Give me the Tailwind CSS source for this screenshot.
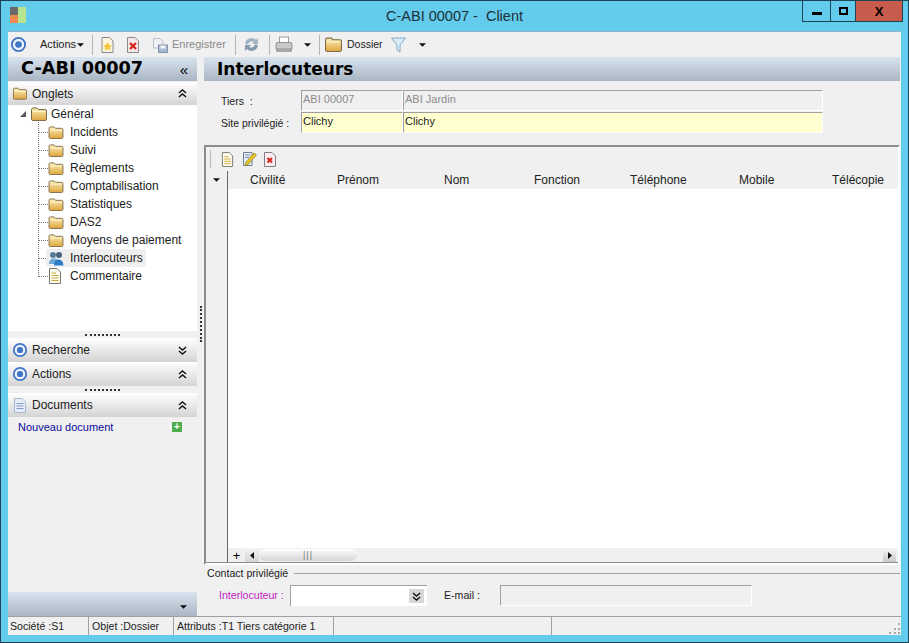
<!DOCTYPE html>
<html lang="fr">
<head>
<meta charset="utf-8">
<title>C-ABI 00007 - Client</title>
<script src="https://cdn.jsdelivr.net/npm/@tailwindcss/browser@4"></script>
</head>
<body class="overflow-hidden">
<svg class="absolute w-0 h-0">
  <defs>
    <linearGradient id="fold" x1="0" y1="0" x2="0" y2="1"><stop offset="0" stop-color="#fbeeb8"/><stop offset="1" stop-color="#dfa63f"/></linearGradient>
    <symbol id="folder" viewBox="0 0 16 14"><path d="M.5 2.500 Q.5 1 2 1H6L7.500 2.500H14Q15.500 2.500 15.500 4V12Q15.500 13.500 14 13.500H2Q.5 13.500 .5 12Z" fill="url(#fold)" stroke="#7d6b45"/><path d="M1.500 4.500H14.500" stroke="#fff6d0"/></symbol>
    <symbol id="ring" viewBox="0 0 18 18"><circle cx="9" cy="9" r="7" fill="#eef3fb" stroke="#3d74c5" stroke-width="2"/><circle cx="9" cy="9" r="3.500" fill="#3d74c5"/></symbol>
    <symbol id="page" viewBox="0 0 14 16"><path d="M1.500.5H9L12.500 4V15.500H1.500Z" fill="#fffdf0" stroke="#77766a"/><path d="M3.500 5H8M3.500 7.500H10.500M3.500 10H10.500M3.500 12.500H10.500" stroke="#c9a93c"/></symbol>
    <symbol id="dbl-up" viewBox="0 0 10 10"><path d="M1 4.500 5 1 9 4.500M1 9 5 5.500 9 9" fill="none" stroke="#111" stroke-width="1.500"/></symbol>
    <symbol id="dbl-down" viewBox="0 0 10 10"><path d="M1 1 5 4.500 9 1M1 5.500 5 9 9 5.500" fill="none" stroke="#111" stroke-width="1.500"/></symbol>
    <symbol id="caret" viewBox="0 0 8 4"><path d="M0 0H8L4 4Z" fill="#111"/></symbol>
  </defs>
</svg>

<div class="w-[909px] h-[643px] flex flex-col bg-[#63cbec] border border-[#1d4556] font-['Liberation_Sans',sans-serif] text-[12px] leading-none text-[#222]">

  <!-- title bar -->
  <div class="relative h-[30px] shrink-0 flex items-center justify-center text-[14.500px] text-[#20303a]">
    <div class="absolute left-[9px] top-[6px] w-[17px] h-[16px] flex">
      <div class="w-[8px] flex flex-col"><div class="h-[8px] bg-[#6a6a6a]"></div><div class="h-[8px] bg-[#f08a4e]"></div></div>
      <div class="w-[8px] bg-[#b5e48c]"></div>
    </div>
    <span>C-ABI 00007 -&nbsp; Client</span>
    <div class="absolute right-[5px] top-0 h-[21px] flex border border-t-0 border-[#1d4556]">
      <div class="w-[28px] flex items-end justify-center pb-[6px] border-r border-[#1d4556]"><div class="w-[10px] h-[3px] bg-black"></div></div>
      <div class="w-[25px] flex items-center justify-center border-r border-[#1d4556]"><div class="w-[9px] h-[8px] border-2 border-black"></div></div>
      <div class="w-[46px] flex items-center justify-center bg-[#c75b4c] text-[13px] font-bold text-black">X</div>
    </div>
  </div>

  <!-- client area -->
  <div class="ml-[7px] mr-[7px] h-[604px] flex flex-col bg-[#f0f0f0] border-t border-[#8fb3c4]">

    <!-- toolbar -->
    <div class="h-[25px] shrink-0 flex items-center text-[11px]">
      <svg class="w-[17px] h-[17px] ml-[2px]"><use href="#ring"/></svg>
      <span class="ml-[13px] w-[36px]">Actions</span>
      <svg class="w-[7px] h-[4px] ml-[1px]"><use href="#caret"/></svg>
      <div class="w-px h-[20px] bg-[#b5b5b5] ml-[8px]"></div>
      <svg class="w-[15px] h-[16px] ml-[7px]" viewBox="0 0 14 16"><path d="M1.500.5H9L12.500 4V15.500H1.500Z" fill="#fdf6dc" stroke="#8a8a8a"/><path d="M7 5l1.500 3 3 .4-2.200 2 .6 3L7 12l-2.900 1.400.6-3-2.200-2 3-.4Z" fill="#f2c53d"/></svg>
      <svg class="w-[14px] h-[16px] ml-[11px]" viewBox="0 0 14 16"><path d="M1.500.5H9L12.500 4V15.500H1.500Z" fill="#f5e8e8" stroke="#8a8a8a"/><path d="M4 6l6 6M10 6l-6 6" stroke="#d8261c" stroke-width="2.400"/></svg>
      <svg class="w-[16px] h-[16px] ml-[12px]" viewBox="0 0 16 16"><path d="M1.500 1.500H8L11 4.500V11H1.500Z" fill="#eef0f3" stroke="#b9bfc8"/><rect x="6.500" y="8" width="9" height="7.500" fill="#a9b8d2" stroke="#8391ab"/><rect x="8.500" y="8.500" width="5" height="3" fill="#f4f6fa"/></svg>
      <span class="ml-[4px] w-[54px] text-[#8a8a8a]">Enregistrer</span>
      <div class="w-px h-[20px] bg-[#b5b5b5] ml-[9px]"></div>
      <svg class="w-[17px] h-[17px] ml-[7px]" viewBox="0 0 17 17"><path d="M2 8A6.500 6.500 0 0 1 13 4L15 2V8H9L11 6A4 4 0 0 0 5 8.500Z" fill="#a3b4c5"/><path d="M15 9A6.500 6.500 0 0 1 4 13L2 15V9H8L6 11A4 4 0 0 0 12 8.500Z" fill="#8699ac"/></svg>
      <div class="w-px h-[20px] bg-[#b5b5b5] ml-[9px]"></div>
      <svg class="w-[18px] h-[17px] ml-[5px]" viewBox="0 0 18 17"><rect x="4.500" y="1" width="9" height="6" fill="#fff" stroke="#9a9a9a"/><path d="M1 8Q1 6.500 3 6.500H15Q17 6.500 17 8V13H1Z" fill="#c9c9c9" stroke="#8f8f8f"/><rect x="1" y="13" width="16" height="3" fill="#a7a7a7"/></svg>
      <svg class="w-[7px] h-[4px] ml-[11px]"><use href="#caret"/></svg>
      <div class="w-px h-[20px] bg-[#b5b5b5] ml-[8px]"></div>
      <svg class="w-[17px] h-[15px] ml-[5px]"><use href="#folder"/></svg>
      <span class="ml-[5px] w-[36px] text-[10.500px]">Dossier</span>
      <svg class="w-[15px] h-[16px] ml-[8px]" viewBox="0 0 15 16"><path d="M.5 1H14.500L9 8V15L6 13V8Z" fill="#dcecf7" stroke="#7fa8c9"/></svg>
      <svg class="w-[7px] h-[4px] ml-[13px]"><use href="#caret"/></svg>
    </div>

    <div class="flex-1 flex min-h-0">
      <!-- left panel -->
      <div class="w-[189px] shrink-0 flex flex-col">
        <div class="h-[24px] flex items-center justify-between pl-[13px] pr-[9px] bg-gradient-to-b from-[#d9e4ef] to-[#a9b6c3]">
          <span class="font-['DejaVu_Sans',sans-serif] font-bold text-[17.700px] text-black">C-ABI 00007</span>
          <span class="text-[15px] text-black">«</span>
        </div>
        <div class="mt-px h-[23px] flex items-center pl-[5px] pr-[10px] bg-gradient-to-b from-white to-[#d4d4d4]">
          <svg class="w-[14px] h-[13px]"><use href="#folder"/></svg>
          <span class="ml-[5px]">Onglets</span>
          <svg class="w-[9px] h-[9px] ml-auto"><use href="#dbl-up"/></svg>
        </div>

        <!-- tree -->
        <div class="relative h-[226px] bg-white">
          <div class="absolute left-[30px] top-[17px] h-[155px] border-l border-dotted border-[#777]"></div>
          <div class="h-[18px] flex items-center pl-[12px]">
            <svg class="w-[6px] h-[6px]" viewBox="0 0 6 6"><path d="M0 6H6V0Z" fill="#595959"/></svg>
            <svg class="w-[18px] h-[14px] ml-[4px]"><use href="#folder"/></svg>
            <span class="ml-[3px]">Général</span>
          </div>
          <div class="h-[18px] flex items-center pl-[31px]"><span class="w-[9px] border-t border-dotted border-[#777]"></span><svg class="w-[16px] h-[13px] mr-[6px]"><use href="#folder"/></svg>Incidents</div>
          <div class="h-[18px] flex items-center pl-[31px]"><span class="w-[9px] border-t border-dotted border-[#777]"></span><svg class="w-[16px] h-[13px] mr-[6px]"><use href="#folder"/></svg>Suivi</div>
          <div class="h-[18px] flex items-center pl-[31px]"><span class="w-[9px] border-t border-dotted border-[#777]"></span><svg class="w-[16px] h-[13px] mr-[6px]"><use href="#folder"/></svg>Règlements</div>
          <div class="h-[18px] flex items-center pl-[31px]"><span class="w-[9px] border-t border-dotted border-[#777]"></span><svg class="w-[16px] h-[13px] mr-[6px]"><use href="#folder"/></svg>Comptabilisation</div>
          <div class="h-[18px] flex items-center pl-[31px]"><span class="w-[9px] border-t border-dotted border-[#777]"></span><svg class="w-[16px] h-[13px] mr-[6px]"><use href="#folder"/></svg>Statistiques</div>
          <div class="h-[18px] flex items-center pl-[31px]"><span class="w-[9px] border-t border-dotted border-[#777]"></span><svg class="w-[16px] h-[13px] mr-[6px]"><use href="#folder"/></svg>DAS2</div>
          <div class="h-[18px] flex items-center pl-[31px]"><span class="w-[9px] border-t border-dotted border-[#777]"></span><svg class="w-[16px] h-[13px] mr-[6px]"><use href="#folder"/></svg>Moyens de paiement</div>
          <div class="h-[18px] flex items-center pl-[31px]">
            <span class="w-[7px] border-t border-dotted border-[#777]"></span>
            <div class="h-[18px] flex items-center pl-[2px] pr-[3px] bg-[#efefef]">
              <svg class="w-[16px] h-[15px] mr-[6px]" viewBox="0 0 16 15"><circle cx="5" cy="4" r="3" fill="#5c7d98"/><circle cx="11" cy="4" r="3" fill="#49637c"/><path d="M1 13Q1 7.500 6 7.500T11 13Z" fill="#6fa9d8"/><path d="M6 14.500Q6 8.500 10.500 8.500T15.500 14.500Z" fill="#2f7cc8"/></svg>Interlocuteurs
            </div>
          </div>
          <div class="h-[18px] flex items-center pl-[31px]"><span class="w-[9px] border-t border-dotted border-[#777]"></span><svg class="w-[14px] h-[16px] mr-[8px]"><use href="#page"/></svg>Commentaire</div>
        </div>

        <div class="h-[7px] flex items-center justify-center"><div class="w-[35px] border-t-2 border-dotted border-[#333]"></div></div>
        <div class="h-[24px] flex items-center pl-[4px] pr-[10px] bg-gradient-to-b from-white to-[#d4d4d4]">
          <svg class="w-[16px] h-[16px]"><use href="#ring"/></svg>
          <span class="ml-[4px]">Recherche</span>
          <svg class="w-[9px] h-[9px] ml-auto"><use href="#dbl-down"/></svg>
        </div>
        <div class="h-[24px] flex items-center pl-[4px] pr-[10px] bg-gradient-to-b from-white to-[#d4d4d4]">
          <svg class="w-[16px] h-[16px]"><use href="#ring"/></svg>
          <span class="ml-[4px]">Actions</span>
          <svg class="w-[9px] h-[9px] ml-auto"><use href="#dbl-up"/></svg>
        </div>
        <div class="h-[7px] flex items-center justify-center"><div class="w-[35px] border-t-2 border-dotted border-[#333]"></div></div>
        <div class="h-[24px] flex items-center pl-[6px] pr-[10px] bg-gradient-to-b from-white to-[#d4d4d4]">
          <svg class="w-[12px] h-[15px]" viewBox="0 0 12 15"><path d="M.5.5H8L11.500 4V14.500H.5Z" fill="#e6edf8" stroke="#a8b8d0"/><path d="M2.500 5.500H9.500M2.500 8H9.500M2.500 10.500H9.500" stroke="#7f9cc8"/></svg>
          <span class="ml-[6px]">Documents</span>
          <svg class="w-[9px] h-[9px] ml-auto"><use href="#dbl-up"/></svg>
        </div>
        <div class="mt-[3px] h-[14px] flex items-center pl-[10px] pr-[15px] text-[11px] text-[#0b0b9c]">
          Nouveau document
          <div class="ml-auto w-[10px] h-[10px] bg-[#4cae4c] flex items-center justify-center text-white font-bold text-[10px]">+</div>
        </div>

        <div class="mt-auto h-[24px] flex items-end justify-end pr-[10px] pb-[7px] bg-gradient-to-b from-[#d9e4ef] to-[#a9b6c3]">
          <svg class="w-[7px] h-[4px]"><use href="#caret"/></svg>
        </div>
      </div>

      <!-- vertical splitter -->
      <div class="w-[7px] shrink-0 flex items-center justify-center"><div class="h-[36px] mt-[-25px] ml-[1px] border-l-2 border-dotted border-[#333]"></div></div>

      <!-- right panel -->
      <div class="flex-1 min-w-0 flex flex-col pr-px">
        <div class="h-[24px] shrink-0 flex items-center pl-[13px] bg-gradient-to-b from-[#d9e4ef] to-[#a9b6c3]">
          <span class="font-['DejaVu_Sans',sans-serif] font-bold text-[17px] text-black">Interlocuteurs</span>
        </div>

        <div class="h-[64px] shrink-0 flex flex-col pt-[9px] gap-[1px]">
          <div class="h-[21px] flex text-[10.500px]">
            <span class="w-[97px] pl-[17px] pt-[6px]">Tiers &nbsp;:</span>
            <div class="w-[102px] border border-[#a0a0a0] border-r-white border-b-white pl-[1px] pt-[3px] text-[#8c8c8c] text-[11px]">ABI 00007</div>
            <div class="w-[420px] border border-[#a0a0a0] border-r-white border-b-white pl-[1px] pt-[3px] text-[#8c8c8c] text-[11px]">ABI Jardin</div>
          </div>
          <div class="h-[21px] flex text-[10.500px]">
            <span class="w-[97px] pl-[17px] pt-[6px]">Site privilégié :</span>
            <div class="w-[102px] border border-[#a0a0a0] border-r-white border-b-white bg-[#ffffcf] pl-[1px] pt-[3px] text-[11px]">Clichy</div>
            <div class="w-[420px] border border-[#a0a0a0] border-r-white border-b-white bg-[#ffffcf] pl-[1px] pt-[3px] text-[11px]">Clichy</div>
          </div>
        </div>

        <!-- grid -->
        <div class="h-[420px] shrink-0 flex flex-col border-2 border-[#8c8c8c] border-r-white border-b-white">
          <div class="h-[24px] shrink-0 flex items-center pl-[4px]">
            <div class="w-px h-[18px] bg-[#b5b5b5]"></div>
            <svg class="w-[13px] h-[15px] ml-[10px]"><use href="#page"/></svg>
            <svg class="w-[15px] h-[16px] ml-[8px]" viewBox="0 0 15 16"><path d="M1.500 1.500H10V14.500H1.500Z" fill="#e8eef7" stroke="#6f7f96"/><path d="M3 4H8M3 6.500H7" stroke="#6f89b5"/><path d="M3 15 4 11 12 2 14.500 4 6.500 13Z" fill="#e6c52a" stroke="#8f7a12" stroke-width=".7"/></svg>
            <svg class="w-[12px] h-[15px] ml-[7px]" viewBox="0 0 12 15"><path d="M.5.5H8L11.500 4V14.500H.5Z" fill="#f8eeee" stroke="#87798a"/><path d="M3.500 6l4.500 4.500M8 6l-4.500 4.500" stroke="#d8261c" stroke-width="2"/></svg>
          </div>
          <div class="flex-1 min-h-0 flex flex-col relative">
            <div class="h-[18px] shrink-0 flex items-center bg-[#f0f0f0]">
              <div class="w-[22px] h-full flex items-center justify-center border-r border-[#666]"><svg class="w-[7px] h-[4px]"><use href="#caret"/></svg></div>
              <div class="flex pl-[22px]">
                <span class="w-[87px]">Civilité</span>
                <span class="w-[107px]">Prénom</span>
                <span class="w-[90px]">Nom</span>
                <span class="w-[96px]">Fonction</span>
                <span class="w-[109px]">Téléphone</span>
                <span class="w-[93px]">Mobile</span>
                <span>Télécopie</span>
              </div>
            </div>
            <div class="flex-1 flex min-h-0">
              <div class="w-[22px] border-r border-[#666] bg-[#f0f0f0]"></div>
              <div class="flex-1 bg-white"></div>
            </div>
            <div class="h-[15px] shrink-0 flex items-center bg-[#f0f0f0] border-b border-[#8c8c8c]">
              <div class="w-[22px] h-full border-r border-[#666]"></div>
              <div class="w-[17px] h-full flex items-center justify-center text-[13px] text-black">+</div>
              <div class="w-[14px] h-full flex items-center justify-center bg-gradient-to-b from-[#f4f4f4] to-[#d5d5d5]"><svg class="w-[4px] h-[7px]" viewBox="0 0 4 7"><path d="M4 0V7L0 3.500Z" fill="#111"/></svg></div>
              <div class="w-[98px] h-[12px] rounded-full bg-gradient-to-b from-white to-[#d5d5d5] flex items-center justify-center text-[9px] text-[#777] tracking-[1px]">|||</div>
              <div class="ml-auto mr-[2px] w-[13px] h-[13px] flex items-center justify-center bg-gradient-to-b from-[#f4f4f4] to-[#c9c9c9]"><svg class="w-[4px] h-[7px]" viewBox="0 0 4 7"><path d="M0 0V7L4 3.500Z" fill="#111"/></svg></div>
            </div>
          </div>
        </div>

        <!-- contact -->
        <div class="flex-1 flex flex-col text-[10.600px]">
          <div class="flex items-center h-[14px] mt-[1px] pl-[3px]">
            <span>Contact privilégié</span>
            <div class="flex-1 ml-[6px] border-t border-[#a0a0a0]"></div>
          </div>
          <div class="h-[21px] mt-[5px] flex items-center">
            <span class="ml-[15px] w-[71px] whitespace-nowrap text-[#c21fc2]">Interlocuteur :</span>
            <div class="w-[137px] h-[21px] flex items-center justify-end pr-[3px] bg-white border-l border-t border-[#a0a0a0]">
              <div class="w-[15px] h-[14px] flex items-center justify-center bg-[#d8d8d8]"><svg class="w-[9px] h-[9px]"><use href="#dbl-down"/></svg></div>
            </div>
            <span class="ml-[17px] w-[56px]">E-mail :</span>
            <div class="w-[252px] h-[21px] border border-[#a0a0a0] border-r-white border-b-white"></div>
          </div>
        </div>
      </div>
    </div>

    <!-- status bar -->
    <div class="h-[19px] shrink-0 flex border-t border-[#a0a0a0] bg-[#f0f0f0] relative text-[10.600px] whitespace-nowrap">
      <div class="w-[81px] pl-[2px] pt-[4px] border-r border-[#a0a0a0]">Société :S1</div>
      <div class="w-[85px] pl-[3px] pt-[4px] border-r border-[#a0a0a0]">Objet :Dossier</div>
      <div class="w-[160px] pl-[3px] pt-[4px] border-r border-[#a0a0a0]">Attributs :T1 Tiers catégorie 1</div>
      <div class="w-[218px] border-r border-[#a0a0a0]"></div>
      <div class="absolute right-[1px] bottom-[1px] w-[11px] h-[11px] grid grid-cols-3 gap-[2px] items-end justify-items-end">
        <span></span><span></span><span class="w-[2px] h-[2px] bg-[#a8a8a8]"></span>
        <span></span><span class="w-[2px] h-[2px] bg-[#a8a8a8]"></span><span class="w-[2px] h-[2px] bg-[#a8a8a8]"></span>
        <span class="w-[2px] h-[2px] bg-[#a8a8a8]"></span><span class="w-[2px] h-[2px] bg-[#a8a8a8]"></span><span class="w-[2px] h-[2px] bg-[#a8a8a8]"></span>
      </div>
    </div>
  </div>
</div>
</body>
</html>
